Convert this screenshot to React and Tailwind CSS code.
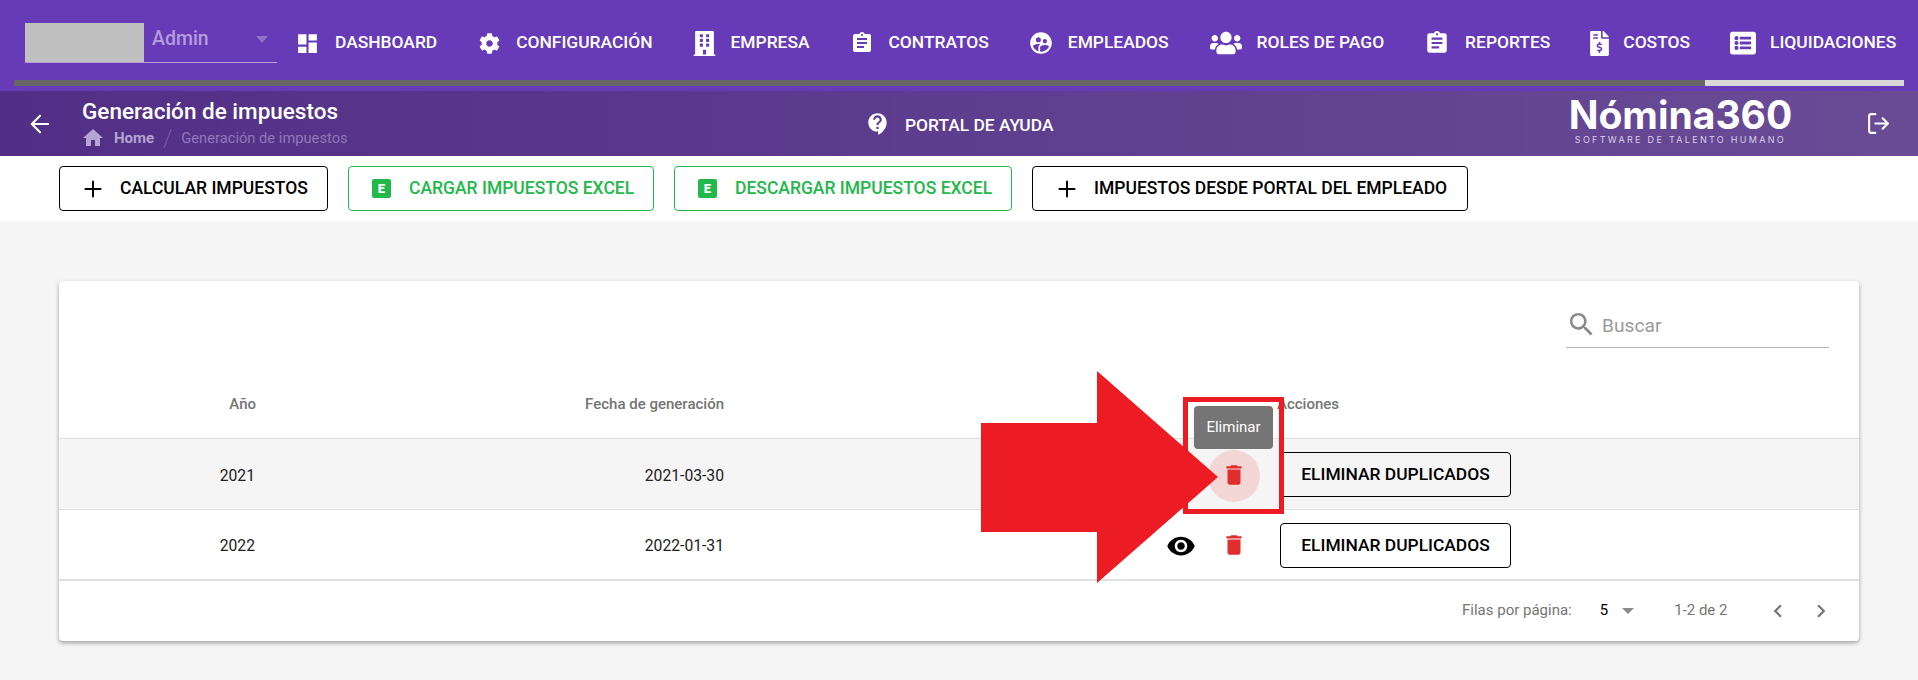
import { ArrowLeft, LogOut, Plus } from "lucide-react"
import { FaBuilding, FaCog, FaFileInvoiceDollar, FaListAlt, FaUsers } from "react-icons/fa"
import {
  MdAssignment,
  MdChevronLeft,
  MdChevronRight,
  MdContactSupport,
  MdDashboard,
  MdDelete,
  MdHome,
  MdSearch,
  MdSupervisedUserCircle,
  MdVisibility,
} from "react-icons/md"

const font = "font-['Roboto',sans-serif]"

function NavItem({ icon, label, className }) {
  return (
    <div className={`flex items-center ${className}`}>
      {icon}
      <span className="text-[17.4px] font-medium leading-none whitespace-nowrap text-white">{label}</span>
    </div>
  )
}

function TopNav() {
  return (
    <div className="h-[91px] bg-[#673ab7] relative">
      <div className="flex items-start pt-[23px] pl-[25px] h-[80px]">
        <div className="w-[252px] h-[40px] border-b border-[#b39ddb] flex shrink-0">
          <div className="w-[119px] h-[39px] bg-[#c0c0c0]"></div>
          <span className="ml-[8px] text-[19.5px] leading-[32px] font-medium text-[#b39ddb]">Admin</span>
          <span className="ml-[47px] mt-[13px] w-0 h-0 border-x-[6px] border-x-transparent border-t-[7px] border-t-[#8e73c4]"></span>
        </div>
        <div className="flex items-center h-[40px]">
          <NavItem className="ml-[21px]" label="DASHBOARD" icon={<MdDashboard className="text-white text-[25px] mr-[15px] -ml-[3px]" />} />
          <NavItem className="ml-[42px]" label="CONFIGURACIÓN" icon={<FaCog className="text-white text-[21px] mr-[16px]" />} />
          <NavItem className="ml-[39px]" label="EMPRESA" icon={<FaBuilding className="text-white text-[25px] mr-[14px]" />} />
          <NavItem className="ml-[42px]" label="CONTRATOS" icon={<MdAssignment className="text-white text-[24px] mr-[15px] -ml-[2px]" />} />
          <NavItem className="ml-[41px]" label="EMPLEADOS" icon={<MdSupervisedUserCircle className="text-white text-[26px] mr-[14px] -ml-[2px]" />} />
          <NavItem className="ml-[41px]" label="ROLES DE PAGO" icon={<FaUsers className="text-white text-[32px] mr-[15px]" />} />
          <NavItem className="ml-[43px]" label="REPORTES" icon={<MdAssignment className="text-white text-[26px] mr-[15px] -ml-[3px]" />} />
          <NavItem className="ml-[37px]" label="COSTOS" icon={<FaFileInvoiceDollar className="text-white text-[25px] mr-[11px]" />} />
          <NavItem className="ml-[40px]" label="LIQUIDACIONES" icon={<FaListAlt className="text-white text-[26px] mr-[14px]" />} />
        </div>
      </div>
      <div className="flex ml-[14px] w-[1890px] h-[6px]">
        <div className="w-[1691px] bg-[#666666]"></div>
        <div className="flex-1 bg-[#d9d9d9]"></div>
      </div>
    </div>
  )
}

function SubHeader() {
  return (
    <div className="h-[65px] flex items-center bg-gradient-to-r from-[#522f86] to-[#694b96] text-white">
      <ArrowLeft className="ml-[26px] w-[28px] h-[28px] shrink-0" strokeWidth={1.8} />
      <div className="ml-[28px] w-[783px] shrink-0 pt-[2px]">
        <div className="text-[22.5px] font-medium leading-[26px]">Generación de impuestos</div>
        <div className="flex items-center h-[26px] mt-[1px] text-[#b5a5d2]">
          <MdHome className="text-[24px] shrink-0 -ml-[1px]" />
          <span className="ml-[9px] text-[15px] font-bold">Home</span>
          <span className="ml-[9px] text-[24px] font-thin text-[#8f78b8]">/</span>
          <span className="ml-[9px] text-[14.7px] text-[#8f78b8]">Generación de impuestos</span>
        </div>
      </div>
      <MdContactSupport className="text-[26px] shrink-0" />
      <span className="ml-[14px] pt-[3px] text-[17.4px] font-medium whitespace-nowrap">PORTAL DE AYUDA</span>
      <div className="ml-[516px] w-[222px] shrink-0 flex flex-col items-center -mt-[5px]">
        <span className="font-['Inter',sans-serif] text-[39px] font-bold leading-[38px]">Nómina360</span>
        <span className="font-['Inter',sans-serif] text-[9px] leading-[12px] tracking-[2.3px] whitespace-nowrap text-[#d9d0e6]">SOFTWARE DE TALENTO HUMANO</span>
      </div>
      <LogOut className="ml-[75px] w-[25px] h-[25px] shrink-0" strokeWidth={2} />
    </div>
  )
}

function ActionButton({ green, icon, label, className }) {
  const color = green ? "border-[#22b84b] text-[#22b84b]" : "border-black text-black"
  return (
    <button className={`h-[45px] border rounded flex items-center justify-start text-[17.5px] font-medium whitespace-nowrap bg-transparent ${color} ${className}`}>
      {icon}
      {label}
    </button>
  )
}

function ExcelIcon() {
  return (
    <span className="w-[19px] h-[19px] rounded-[2px] bg-[#22b84b] text-white text-[13px] font-black leading-[19px] text-center">E</span>
  )
}

function Toolbar() {
  return (
    <div className="h-[65px] bg-white flex items-start pt-[10px] pl-[59px] gap-[20px]">
      <ActionButton className="w-[269px] pl-[20px] gap-[14px]" label="CALCULAR IMPUESTOS" icon={<Plus className="w-[26px] h-[26px]" strokeWidth={1.8} />} />
      <ActionButton green className="w-[306px] pl-[23px] gap-[18px]" label="CARGAR IMPUESTOS EXCEL" icon={<ExcelIcon />} />
      <ActionButton green className="w-[338px] pl-[23px] gap-[18px]" label="DESCARGAR IMPUESTOS EXCEL" icon={<ExcelIcon />} />
      <ActionButton className="w-[436px] pl-[21px] gap-[14px]" label="IMPUESTOS DESDE PORTAL DEL EMPLEADO" icon={<Plus className="w-[26px] h-[26px]" strokeWidth={1.8} />} />
    </div>
  )
}

function Row({ year, date, hover, border }) {
  return (
    <div className={`h-[71px] flex items-center pt-[3px] text-[15.7px] text-[#212121] ${border} ${hover ? "bg-[#f5f5f5]" : ""}`}>
      <div className="w-[196px] text-right shrink-0">{year}</div>
      <div className="w-[469px] text-right shrink-0">{date}</div>
      <div className="ml-[442px] w-[30px] flex justify-center shrink-0">
        <MdVisibility className="text-black text-[30px]" />
      </div>
      <div className="ml-[12px] relative w-[52px] h-[52px] rounded-full flex items-center justify-center shrink-0">
        {hover && <div className="absolute inset-0 rounded-full bg-[#f3d6d6]"></div>}
        <MdDelete className="relative -mt-[2px] text-[#e02e2e] text-[26px]" />
      </div>
      <button className="ml-[20px] -mt-[2px] w-[231px] h-[45px] border border-black rounded text-[17.4px] font-medium text-black shrink-0">ELIMINAR DUPLICADOS</button>
    </div>
  )
}

function TableCard() {
  return (
    <div className="mt-[60px] mx-[59px] h-[360px] bg-white rounded shadow-[0_2px_4px_rgba(0,0,0,0.35)]">
      <div className="h-[67px] flex justify-end items-end pr-[30px]">
        <div className="w-[263px] h-[46px] border-b border-[#b5b5b5] flex items-center">
          <MdSearch className="text-[#8a8a8a] text-[31px]" />
          <span className="ml-[5px] pt-[3px] text-[19.2px] text-[#9a9a9a]">Buscar</span>
        </div>
      </div>
      <div className="h-[91px] flex items-center pt-[22px] text-[15px] font-medium text-[#757575] border-b border-[#e0e0e0]">
        <div className="w-[197px] text-right shrink-0">Año</div>
        <div className="w-[468px] text-right shrink-0">Fecha de generación</div>
        <div className="ml-[553px]">Acciones</div>
      </div>
      <Row year="2021" date="2021-03-30" hover border="border-b border-[#e0e0e0]" />
      <Row year="2022" date="2022-01-31" border="border-b-2 border-[#e0e0e0]" />
      <div className="h-[59px] flex items-center text-[15px] text-[#757575]">
        <span className="ml-[1403px]">Filas por página:</span>
        <span className="ml-[28px] text-black">5</span>
        <span className="ml-[14px] w-0 h-0 border-x-[6.5px] border-x-transparent border-t-[6px] border-t-[#8a8a8a]"></span>
        <span className="ml-[40px]">1-2 de 2</span>
        <MdChevronLeft className="ml-[38px] text-[26px]" />
        <MdChevronRight className="ml-[17px] text-[26px]" />
      </div>
    </div>
  )
}

export default function App() {
  return (
    <div className={`${font} relative w-[1918px] h-[680px] overflow-hidden bg-[#f5f5f5]`}>
      <TopNav />
      <SubHeader />
      <Toolbar />
      <TableCard />

      {/* annotation drawn over the page: tooltip, frame and arrow */}
      <div className="absolute left-[1194px] top-[406px] w-[79px] h-[43px] rounded bg-[#757575] text-white text-[15px] flex items-center justify-center">Eliminar</div>
      <div className="absolute left-[1183px] top-[397px] w-[101px] h-[117px] border-[5px] border-[#ed1c24]"></div>
      <svg className="absolute left-[981px] top-[371px]" width="237" height="212" viewBox="0 0 237 212">
        <path d="M0 52H116V0L237 106L116 212V161H0Z" fill="#ed1c24" />
      </svg>
    </div>
  )
}
